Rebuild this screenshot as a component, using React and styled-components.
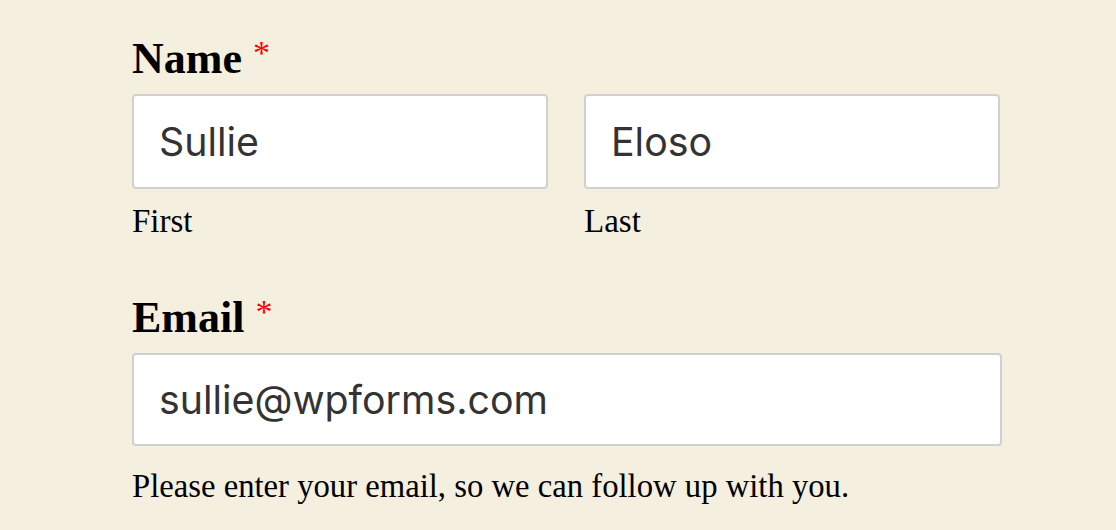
import React from "react";
import styled, { createGlobalStyle } from "styled-components";

const Global = createGlobalStyle`
  html, body {
    margin: 0;
    padding: 0;
    background: #f5efe0;
  }
`;

const App = () => {
  return (
    <>
      <Global />
      <Form>
        <Field>
          <Label>
            Name <Req>*</Req>
          </Label>
          <Row>
            <Sub>
              <Input defaultValue="Sullie" />
              <SubLabel>First</SubLabel>
            </Sub>
            <Sub>
              <Input defaultValue="Eloso" />
              <SubLabel>Last</SubLabel>
            </Sub>
          </Row>
        </Field>
        <Field $email>
          <Label>
            Email <Req>*</Req>
          </Label>
          <Input $wide type="email" defaultValue="sullie@wpforms.com" />
          <Description>
            Please enter your email, so we can follow up with you.
          </Description>
        </Field>
      </Form>
    </>
  );
};

const Form = styled.form`
  width: 870px;
  padding: 33px 0 0 132px;
  * {
    box-sizing: border-box;
  }
`;

const Field = styled.div`
  display: flex;
  flex-direction: column;
  margin-top: ${(p) => (p.$email ? "51px" : "0")};
`;

const Label = styled.label`
  display: block;
  height: 52px;
  line-height: 52px;
  margin-bottom: 9px;
  font-family: "Liberation Serif", "Times New Roman", serif;
  font-weight: 700;
  font-size: 44px;
  color: #000;
`;

const Req = styled.span`
  color: #ff0000;
  font-weight: 400;
  font-size: 34px;
  vertical-align: top;
  position: relative;
  top: -6px;
`;

const Row = styled.div`
  display: flex;
  gap: 36px;
`;

const Sub = styled.div`
  display: flex;
  flex-direction: column;
  width: 416px;
`;

const Input = styled.input`
  width: ${(p) => (p.$wide ? "870px" : "416px")};
  height: ${(p) => (p.$wide ? "93px" : "95px")};
  padding: 0 25px;
  border: 2px solid #d0d0d0;
  border-radius: 4px;
  background: #fff;
  font-family: "Inter", "Noto Sans", sans-serif;
  font-size: 39.3px;
  color: #333;
  outline: none;
`;

const SubLabel = styled.div`
  height: 40px;
  line-height: 40px;
  margin-top: 12px;
  font-family: "Liberation Serif", "Times New Roman", serif;
  font-size: 33px;
  color: #000;
`;

const Description = styled.div`
  height: 40px;
  line-height: 40px;
  margin-top: 20px;
  font-family: "Liberation Serif", "Times New Roman", serif;
  font-size: 32.7px;
  color: #000;
`;

export default App;
